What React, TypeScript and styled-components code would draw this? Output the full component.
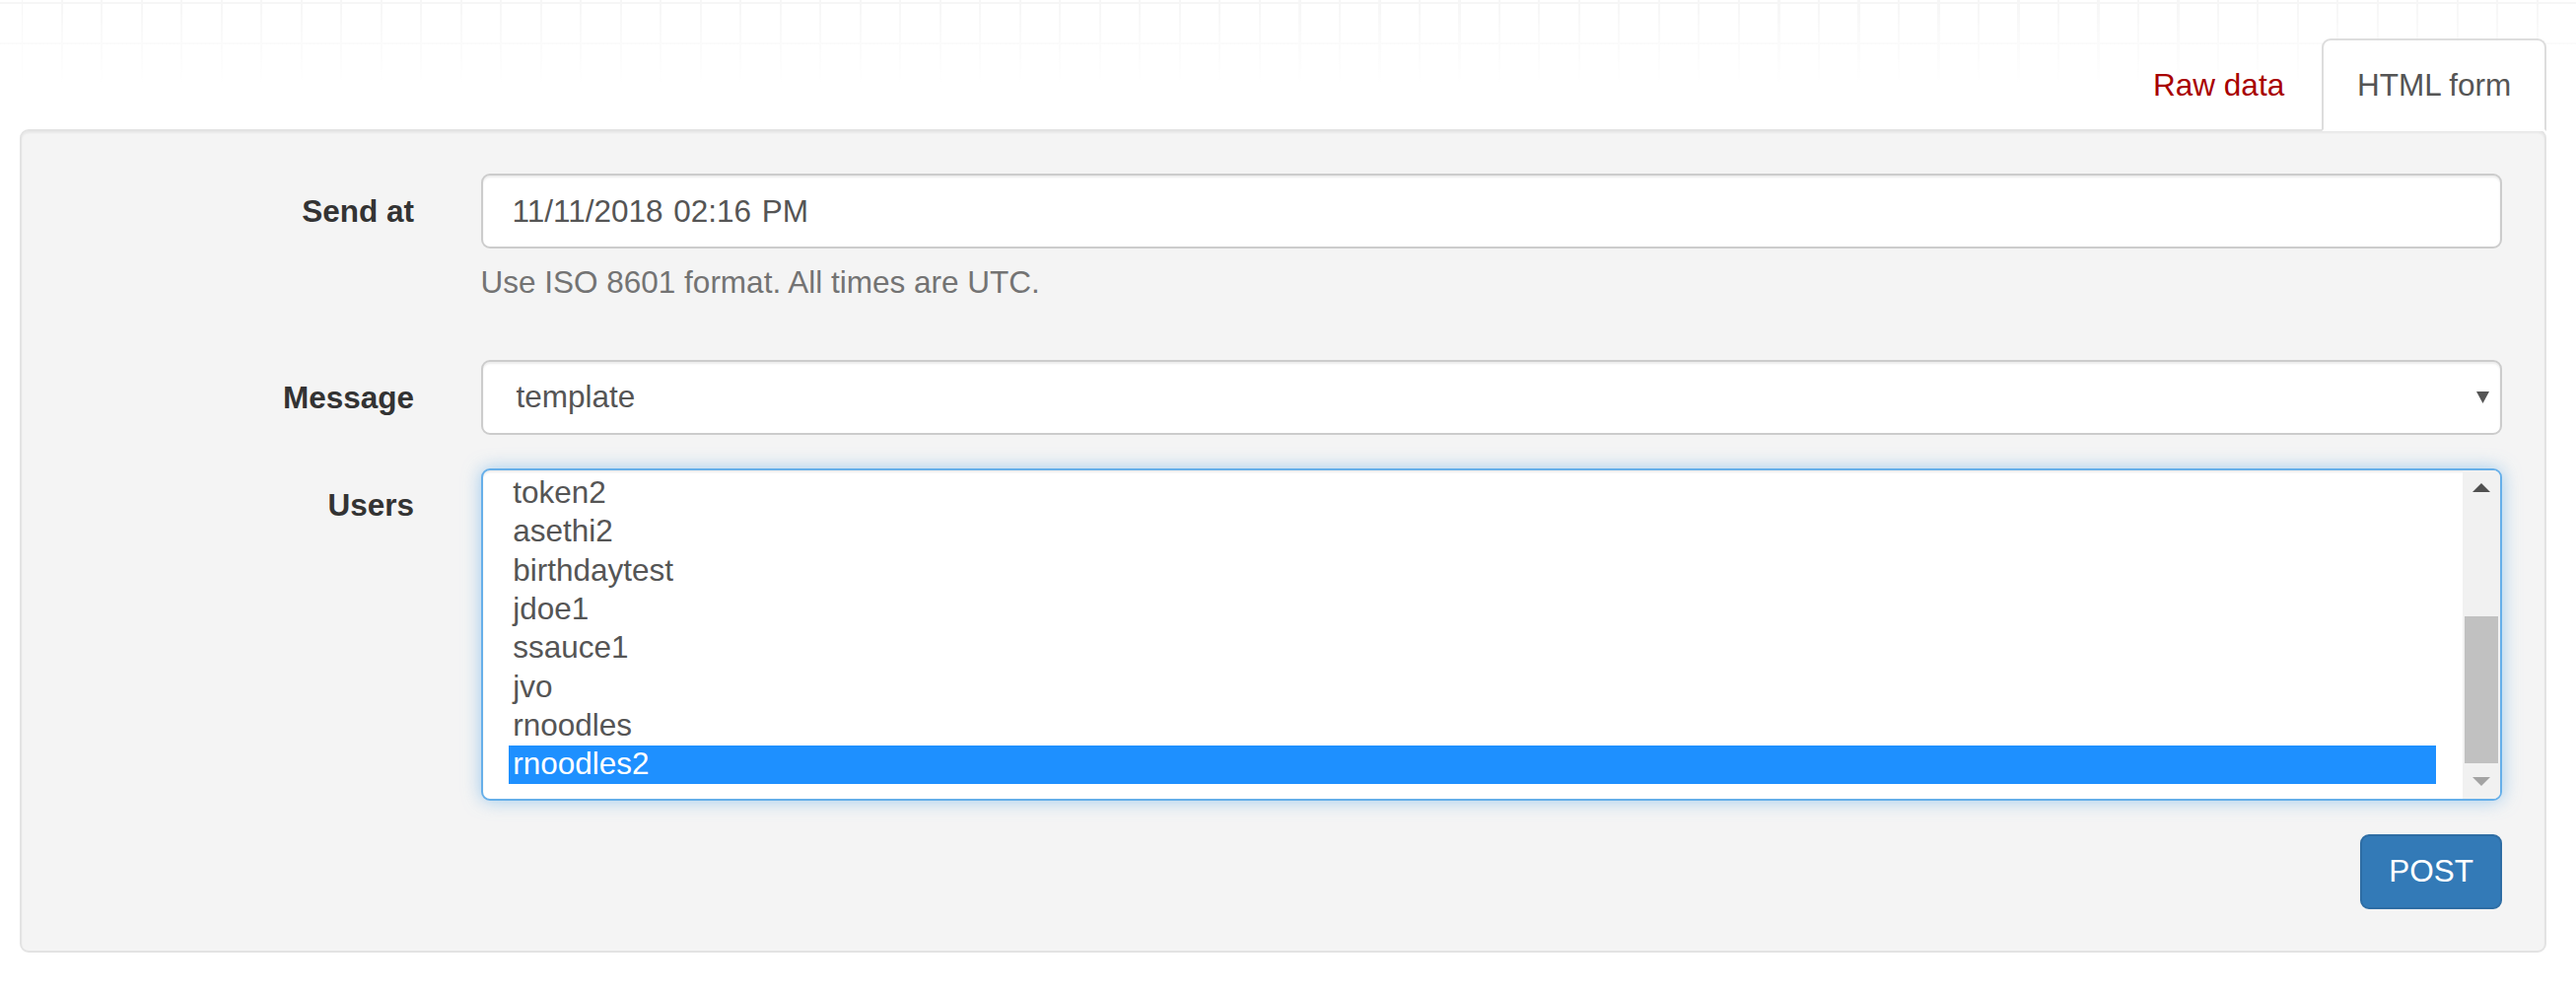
import React from "react";
import styled, { createGlobalStyle } from "styled-components";

const GlobalStyle = createGlobalStyle`
  html, body {
    margin: 0;
    padding: 0;
    background: #ffffff;
  }
  body {
    font-family: "Liberation Sans", Arial, Helvetica, sans-serif;
    font-size: 31.5px;
    line-height: 45px;
    color: #333333;
  }
  * { box-sizing: border-box; }
`;

const Page = styled.div`
  min-height: 100vh;
  padding: 39px 30px 0 20px;
  background:
    linear-gradient(to bottom, rgba(255, 255, 255, 0) 0px, rgba(255, 255, 255, 0.55) 45px, #ffffff 84px),
    repeating-linear-gradient(90deg, transparent 0px, transparent 21.5px, #f6f6f6 21.5px, #f6f6f6 23.5px, transparent 23.5px, transparent 40.5px),
    repeating-linear-gradient(180deg, transparent 0px, transparent 2.5px, #f6f6f6 2.5px, #f6f6f6 4.5px, transparent 4.5px, transparent 40.5px);
  background-repeat: no-repeat, repeat-x, repeat-x;
  background-size: 100% 100%, 100% 84px, 100% 84px;
`;

const TabBar = styled.nav`
  display: flex;
  justify-content: flex-end;
  align-items: flex-end;
  margin-bottom: -2.5px;
  position: relative;
  z-index: 1;
`;

const Tab = styled.a<{ $active?: boolean }>`
  display: block;
  padding: 22.5px 33.75px;
  margin-left: 2.25px;
  font-size: 31.5px;
  line-height: 45px;
  text-decoration: none;
  cursor: pointer;
  border: 2.25px solid ${(p) => (p.$active ? "#dddddd" : "transparent")};
  border-bottom-color: ${(p) => (p.$active ? "#ffffff" : "transparent")};
  border-radius: 9px 9px 0 0;
  background: ${(p) => (p.$active ? "#ffffff" : "transparent")};
  color: ${(p) => (p.$active ? "#555555" : "#a80000")};
`;

const Well = styled.div`
  background: #f4f4f4;
  border: 2.25px solid #e3e3e3;
  border-radius: 9px;
  box-shadow: inset 0 2px 2px rgba(0, 0, 0, 0.05);
  padding: 43.75px 43px 42px 0;
`;

const Form = styled.form`
  display: flex;
  flex-direction: column;
`;

const FieldRow = styled.div`
  display: grid;
  grid-template-columns: 398px 1fr;
  column-gap: 67.5px;
  margin-bottom: 33.75px;
`;

const Label = styled.label`
  text-align: right;
  font-weight: bold;
  color: #333333;
  padding-top: 15.75px;
  line-height: 45px;
`;

const Control = styled.div`
  display: flex;
  flex-direction: column;
  min-width: 0;
`;

const fieldBase = `
  height: 76px;
  border: 2.25px solid #cccccc;
  border-radius: 9px;
  background: #ffffff;
  box-shadow: inset 0 2px 2px rgba(0, 0, 0, 0.075);
  color: #555555;
  font-family: "Liberation Sans", Arial, Helvetica, sans-serif;
  font-size: 31.5px;
  line-height: 45px;
`;

const TextInput = styled.div`
  ${fieldBase}
  padding: 13.5px 27px 13.5px 30px;
  word-spacing: 2px;
`;

const SelectBox = styled.div`
  ${fieldBase}
  display: flex;
  align-items: center;
  justify-content: space-between;
  padding: 0 11px 0 34px;
`;

const Help = styled.p`
  margin: 11.25px 0 22.5px;
  color: #737373;
  line-height: 45px;
`;

const ListBox = styled.div`
  display: flex;
  height: 337.5px;
  border: 2.25px solid #66afe9;
  border-radius: 9px;
  background: #ffffff;
  overflow: hidden;
  box-shadow: inset 0 2px 2px rgba(0, 0, 0, 0.075), 0 0 18px rgba(102, 175, 233, 0.6);
`;

const Options = styled.ul`
  flex: 1;
  list-style: none;
  margin: 0;
  padding: 4.6px 27px 0 26.75px;
  overflow: hidden;
`;

const Option = styled.li<{ $selected?: boolean }>`
  padding: 0 4px 3.3px;
  line-height: 36px;
  white-space: nowrap;
  color: ${(p) => (p.$selected ? "#ffffff" : "#555555")};
  background: ${(p) => (p.$selected ? "#1e90ff" : "transparent")};
`;

const Scrollbar = styled.div`
  width: 37.75px;
  display: flex;
  flex-direction: column;
  background: #f1f1f1;
`;

const ScrollArrow = styled.div`
  height: 36px;
  display: flex;
  align-items: center;
  justify-content: center;
`;

const Track = styled.div`
  flex: 1;
  display: flex;
  flex-direction: column;
  justify-content: flex-end;
`;

const Thumb = styled.div<{ $size: number }>`
  height: ${(p) => p.$size}px;
  margin: 0 2px;
  background: #c1c1c1;
`;

const Actions = styled.div`
  display: flex;
  justify-content: flex-end;
`;

const Button = styled.button`
  font-family: "Liberation Sans", Arial, Helvetica, sans-serif;
  font-size: 31.5px;
  line-height: 45px;
  padding: 13.5px 27px;
  color: #ffffff;
  background: #337ab7;
  border: 2.25px solid #2e6da4;
  border-radius: 9px;
  cursor: pointer;
`;

const Triangle = ({ dir, color }: { dir: "up" | "down"; color: string }) => (
  <svg width="18" height="9" viewBox="0 0 18 9">
    {dir === "up" ? (
      <polygon points="0,9 18,9 9,0" fill={color} />
    ) : (
      <polygon points="0,0 18,0 9,9" fill={color} />
    )}
  </svg>
);

const SelectCaret = () => (
  <svg width="13" height="12" viewBox="0 0 13 12">
    <polygon points="0,0 13,0 6.5,12" fill="#555555" />
  </svg>
);

const users = [
  "token2",
  "asethi2",
  "birthdaytest",
  "jdoe1",
  "ssauce1",
  "jvo",
  "rnoodles",
  "rnoodles2",
];

export default function App() {
  return (
    <>
      <GlobalStyle />
      <Page>
        <TabBar>
          <Tab>Raw data</Tab>
          <Tab $active>HTML form</Tab>
        </TabBar>
        <Well>
          <Form onSubmit={(e) => e.preventDefault()}>
            <FieldRow>
              <Label>Send at</Label>
              <Control>
                <TextInput>11/11/2018 02:16 PM</TextInput>
                <Help>Use ISO 8601 format. All times are UTC.</Help>
              </Control>
            </FieldRow>
            <FieldRow>
              <Label>Message</Label>
              <Control>
                <SelectBox>
                  <span>template</span>
                  <SelectCaret />
                </SelectBox>
              </Control>
            </FieldRow>
            <FieldRow>
              <Label>Users</Label>
              <Control>
                <ListBox>
                  <Options>
                    {users.map((u) => (
                      <Option key={u} $selected={u === "rnoodles2"}>
                        {u}
                      </Option>
                    ))}
                  </Options>
                  <Scrollbar>
                    <ScrollArrow>
                      <Triangle dir="up" color="#505050" />
                    </ScrollArrow>
                    <Track>
                      <Thumb $size={148.75} />
                    </Track>
                    <ScrollArrow>
                      <Triangle dir="down" color="#a3a3a3" />
                    </ScrollArrow>
                  </Scrollbar>
                </ListBox>
              </Control>
            </FieldRow>
            <Actions>
              <Button type="submit">POST</Button>
            </Actions>
          </Form>
        </Well>
      </Page>
    </>
  );
}
